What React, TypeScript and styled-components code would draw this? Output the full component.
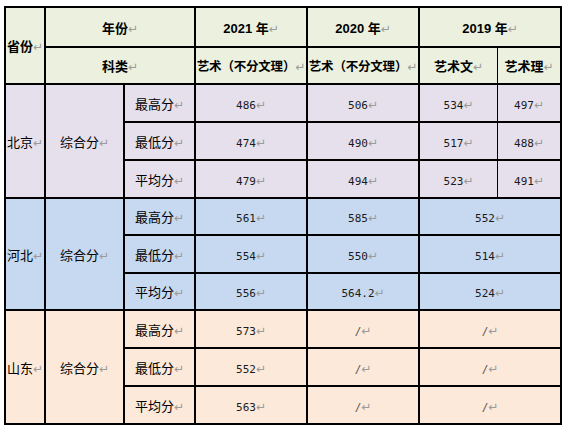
import styled, { createGlobalStyle } from "styled-components";

const GlobalStyle = createGlobalStyle`
  body {
    margin: 0;
    background: #fff;
    font-family: "Liberation Sans", "Noto Sans CJK SC", sans-serif;
  }
`;

const Wrap = styled.div`
  padding: 6px 0 0 4px;
`;

const Table = styled.table`
  table-layout: fixed;
  border-collapse: separate;
  border-spacing: 0;
  width: 558px;
  border-top: 2px solid #000;
  border-left: 2px solid #000;
`;

const Row = styled.tr<{ $h: number }>`
  height: ${(p) => p.$h}px;
`;

const Cell = styled.td<{
  $tone: string;
  $bold?: boolean;
  $thin?: boolean;
  $tight?: boolean;
}>`
  padding: 0;
  background: ${(p) => p.$tone};
  border-right: ${(p) => (p.$thin ? "1px" : "2px")} solid #000;
  border-bottom: 2px solid #000;
  text-align: center;
  vertical-align: middle;
  white-space: nowrap;
  overflow: hidden;
  color: #000;
  font-size: ${(p) => (p.$tight ? "12.5px" : "13px")};
  letter-spacing: ${(p) => (p.$tight ? "-0.2px" : "0")};
  font-weight: ${(p) => (p.$bold ? 700 : 400)};
  font-family: ${(p) =>
    p.$bold
      ? `"Liberation Sans", "Noto Sans CJK SC", sans-serif`
      : `"Noto Sans CJK SC", sans-serif`};
`;

const Num = styled.span<{ $muted?: boolean }>`
  font-family: "DejaVu Sans Mono", monospace;
  font-size: 11px;
  color: ${(p) => (p.$muted ? "#555" : "#1a1a1a")};
`;

const Mark = styled.span`
  color: #9a9a9a;
  font-family: "DejaVu Sans", sans-serif;
  font-size: 12px;
  font-weight: 400;
  letter-spacing: 0;
`;

const HEAD = "#EBF1DE";
const cols = [40, 79, 71, 112, 112, 78, 64];

type Region = {
  name: string;
  tone: string;
  heights: number[];
  merged: boolean;
  rows: string[][];
};

const regions: Region[] = [
  {
    name: "北京",
    tone: "#E5E0EC",
    heights: [38, 38, 38],
    merged: false,
    rows: [
      ["最高分", "486", "506", "534", "497"],
      ["最低分", "474", "490", "517", "488"],
      ["平均分", "479", "494", "523", "491"],
    ],
  },
  {
    name: "河北",
    tone: "#C6D9F0",
    heights: [37, 38, 37],
    merged: true,
    rows: [
      ["最高分", "561", "585", "552"],
      ["最低分", "554", "550", "514"],
      ["平均分", "556", "564.2", "524"],
    ],
  },
  {
    name: "山东",
    tone: "#FDE9D9",
    heights: [38, 38, 38],
    merged: true,
    rows: [
      ["最高分", "573", "/", "/"],
      ["最低分", "552", "/", "/"],
      ["平均分", "563", "/", "/"],
    ],
  },
];

const Text = ({ children }: { children: React.ReactNode }) => (
  <>
    {children}
    <Mark>↵</Mark>
  </>
);

const Value = ({ v }: { v: string }) => (
  <>
    <Num $muted={v === "/"}>{v}</Num>
    <Mark>↵</Mark>
  </>
);

export default function App() {
  return (
    <Wrap>
      <GlobalStyle />
      <Table>
        <colgroup>
          {cols.map((w, i) => (
            <col key={i} style={{ width: w }} />
          ))}
        </colgroup>
        <tbody>
          <Row $h={40}>
            <Cell $tone={HEAD} $bold rowSpan={2}>
              <Text>省份</Text>
            </Cell>
            <Cell $tone={HEAD} $bold colSpan={2}>
              <Text>年份</Text>
            </Cell>
            <Cell $tone={HEAD} $bold>
              <Text>2021 年</Text>
            </Cell>
            <Cell $tone={HEAD} $bold>
              <Text>2020 年</Text>
            </Cell>
            <Cell $tone={HEAD} $bold colSpan={2}>
              <Text>2019 年</Text>
            </Cell>
          </Row>
          <Row $h={37}>
            <Cell $tone={HEAD} $bold colSpan={2}>
              <Text>科类</Text>
            </Cell>
            <Cell $tone={HEAD} $bold $tight>
              <Text>艺术（不分文理）</Text>
            </Cell>
            <Cell $tone={HEAD} $bold $tight>
              <Text>艺术（不分文理）</Text>
            </Cell>
            <Cell $tone={HEAD} $bold $thin>
              <Text>艺术文</Text>
            </Cell>
            <Cell $tone={HEAD} $bold>
              <Text>艺术理</Text>
            </Cell>
          </Row>
          {regions.map((r) =>
            r.rows.map((row, i) => (
              <Row key={r.name + i} $h={r.heights[i]}>
                {i === 0 && (
                  <>
                    <Cell $tone={r.tone} rowSpan={3}>
                      <Text>{r.name}</Text>
                    </Cell>
                    <Cell $tone={r.tone} rowSpan={3}>
                      <Text>综合分</Text>
                    </Cell>
                  </>
                )}
                <Cell $tone={r.tone}>
                  <Text>{row[0]}</Text>
                </Cell>
                <Cell $tone={r.tone}>
                  <Value v={row[1]} />
                </Cell>
                <Cell $tone={r.tone}>
                  <Value v={row[2]} />
                </Cell>
                {r.merged ? (
                  <Cell $tone={r.tone} colSpan={2}>
                    <Value v={row[3]} />
                  </Cell>
                ) : (
                  <>
                    <Cell $tone={r.tone} $thin>
                      <Value v={row[3]} />
                    </Cell>
                    <Cell $tone={r.tone}>
                      <Value v={row[4]} />
                    </Cell>
                  </>
                )}
              </Row>
            ))
          )}
        </tbody>
      </Table>
    </Wrap>
  );
}
